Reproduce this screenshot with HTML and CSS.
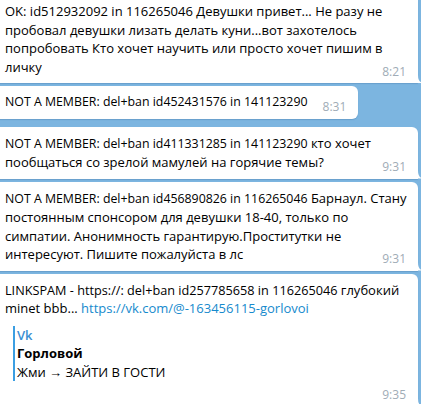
FILE: index.html
```html
<!DOCTYPE html>
<html lang="ru">
<head>
<meta charset="utf-8">
<link rel="stylesheet" href="styles.css">
</head>
<body>
<div class="chat">
  <div class="bubble tailed">
    <p class="text">OK: id512932092 in 116265046 Девушки привет... Не разу не пробовал девушки лизать делать куни...вот захотелось попробовать Кто хочет научить или просто хочет пишим в личку<span class="time">8:21</span></p>
  </div>
  <div class="bubble single">
    <p class="text meta">NOT A MEMBER: del+ban id452431576 in 141123290</p>
    <span class="time">8:31</span>
  </div>
  <div class="bubble tailed spaced">
    <p class="text"><span class="meta">NOT A MEMBER: del+ban id411331285 in 141123290</span> кто хочет пообщаться со зрелой мамулей на горячие темы?<span class="time">9:31</span></p>
  </div>
  <div class="bubble tailed">
    <p class="text"><span class="meta">NOT A MEMBER: del+ban id456890826 in 116265046</span> Барнаул. Стану постоянным спонсором для девушки 18-40, только по симпатии. Анонимность гарантирую.Проститутки не интересуют. Пишите пожалуйста в лс<span class="time">9:31</span></p>
  </div>
  <div class="bubble tailed">
    <p class="text"><span class="meta light">LINKSPAM - https://: del+ban id257785658 in 116265046</span> глубокий minet bbb... <a class="link" href="#">https://vk.com/@-163456115-gorlovoi</a></p>
    <div class="preview">
      <div class="site">Vk</div>
      <div class="title">Горловой</div>
      <div class="desc">Жми → ЗАЙТИ В ГОСТИ</div>
    </div>
    <span class="time">9:35</span>
  </div>
</div>
</body>
</html>
```

FILE: styles.css
```css
html, body {
  margin: 0;
  padding: 0;
}
body {
  background: #7cb5e0;
  font-family: "Open Sans", "Liberation Sans", sans-serif;
  font-size: 13px;
  line-height: 18.5px;
  color: #000;
  overflow: hidden;
  height: 404px;
}
.chat {
  display: flex;
  flex-direction: column;
  align-items: flex-start;
  gap: 3px;
  margin-top: -5px;
  margin-left: -10px;
}
.bubble {
  position: relative;
  box-sizing: border-box;
  max-width: 428px;
  background: #fff;
  border-radius: 6px;
  padding: 7px 6px 7px 15px;
  box-shadow: 0 1px 1px rgba(70, 120, 165, 0.35);
}
.bubble.tailed {
  border-bottom-right-radius: 0;
}
.bubble.tailed::after {
  content: "";
  position: absolute;
  right: -6px;
  bottom: 0;
  width: 6px;
  height: 8px;
  background: #fff;
  clip-path: path('M0 0 Q0 8 6 8 L0 8 Z');
}
.bubble.single {
  display: flex;
  align-items: flex-end;
}
.bubble.spaced {
  margin-top: 5px;
}
.text {
  margin: 0;
}
.meta {
  font-size: 12.35px;
}
.meta.light {
  font-size: 12.7px;
}
.time {
  float: right;
  margin: 5px 6px -5px 15px;
  font-size: 12px;
  color: #a0acb6;
}
.bubble.single .time {
  float: none;
  margin: 0 6px -5px 15px;
}
.link {
  color: #168acd;
  text-decoration: none;
}
.preview {
  margin: 8px 0 0 8px;
  border-left: 2px solid #3b9ee2;
  padding-left: 2px;
}
.site {
  color: #3a8fd3;
  font-weight: 600;
}
.title {
  font-weight: 700;
}
```
